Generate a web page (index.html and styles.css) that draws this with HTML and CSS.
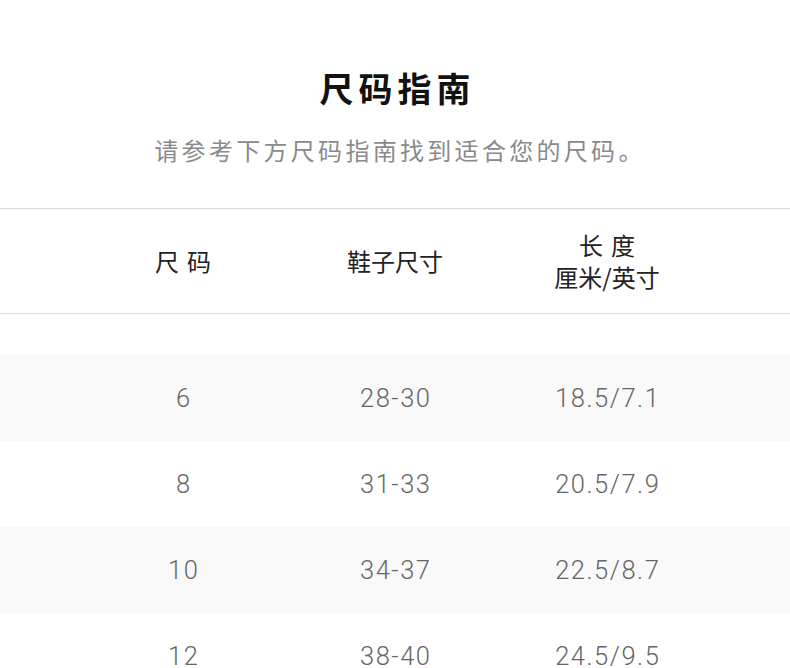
FILE: index.html
```html
<!DOCTYPE html>
<html lang="zh-CN">
<head>
<meta charset="utf-8">
<link rel="stylesheet" href="styles.css">
<title>尺码指南</title>
</head>
<body>
<div class="page">
  <h1 class="title">尺码指南</h1>
  <p class="subtitle">请参考下方尺码指南找到适合您的尺码。</p>
  <div class="table">
    <div class="head">
      <div class="grid">
        <div class="cell"><span class="spaced">尺码</span></div>
        <div class="cell">鞋子尺寸</div>
        <div class="cell"><span class="spaced">长度</span><br>厘米/英寸</div>
      </div>
    </div>
    <div class="body">
      <div class="row alt"><div class="grid"><div class="cell">6</div><div class="cell">28-30</div><div class="cell">18.5/7.1</div></div></div>
      <div class="row"><div class="grid"><div class="cell">8</div><div class="cell">31-33</div><div class="cell">20.5/7.9</div></div></div>
      <div class="row alt"><div class="grid"><div class="cell">10</div><div class="cell">34-37</div><div class="cell">22.5/8.7</div></div></div>
      <div class="row"><div class="grid"><div class="cell">12</div><div class="cell">38-40</div><div class="cell">24.5/9.5</div></div></div>
    </div>
  </div>
</div>
</body>
</html>
```
FILE: styles.css
```css
* { box-sizing: border-box; }
html, body { margin: 0; padding: 0; background: #fff; }
body {
  font-family: "Noto Sans CJK SC", "Noto Sans", sans-serif;
  color: #222;
}
.page { padding-top: 68px; }
.title {
  margin: 0;
  text-align: center;
  font-size: 34px;
  line-height: 40px;
  font-weight: 700;
  letter-spacing: 5px;
  margin-right: -5px;
  color: #111;
}
.subtitle {
  margin: 27px 0 0;
  padding-left: 10px;
  text-align: center;
  font-size: 24px;
  line-height: 30px;
  letter-spacing: 3.3px;
  color: #8a8a8a;
}
.table { margin-top: 43px; }
.grid {
  width: 636px;
  margin: 0 auto;
  display: grid;
  grid-template-columns: repeat(3, 1fr);
  align-items: center;
  height: 100%;
}
.cell { text-align: center; }
.head {
  border-top: 1px solid #dadada;
  border-bottom: 1px solid #dadada;
  height: 106px;
  font-size: 24px;
  line-height: 32px;
  color: #222;
}
.spaced { letter-spacing: 8px; margin-right: -8px; }
.body { padding-top: 41px; }
.row {
  height: 86px;
  font-family: Roboto, "Noto Sans", sans-serif;
  font-weight: 300;
  font-size: 25.5px;
  letter-spacing: 1.5px;
  color: #666;
}
.row .cell { margin-right: -1.5px; }
.row.alt { background: #f9f9f9; }
```
